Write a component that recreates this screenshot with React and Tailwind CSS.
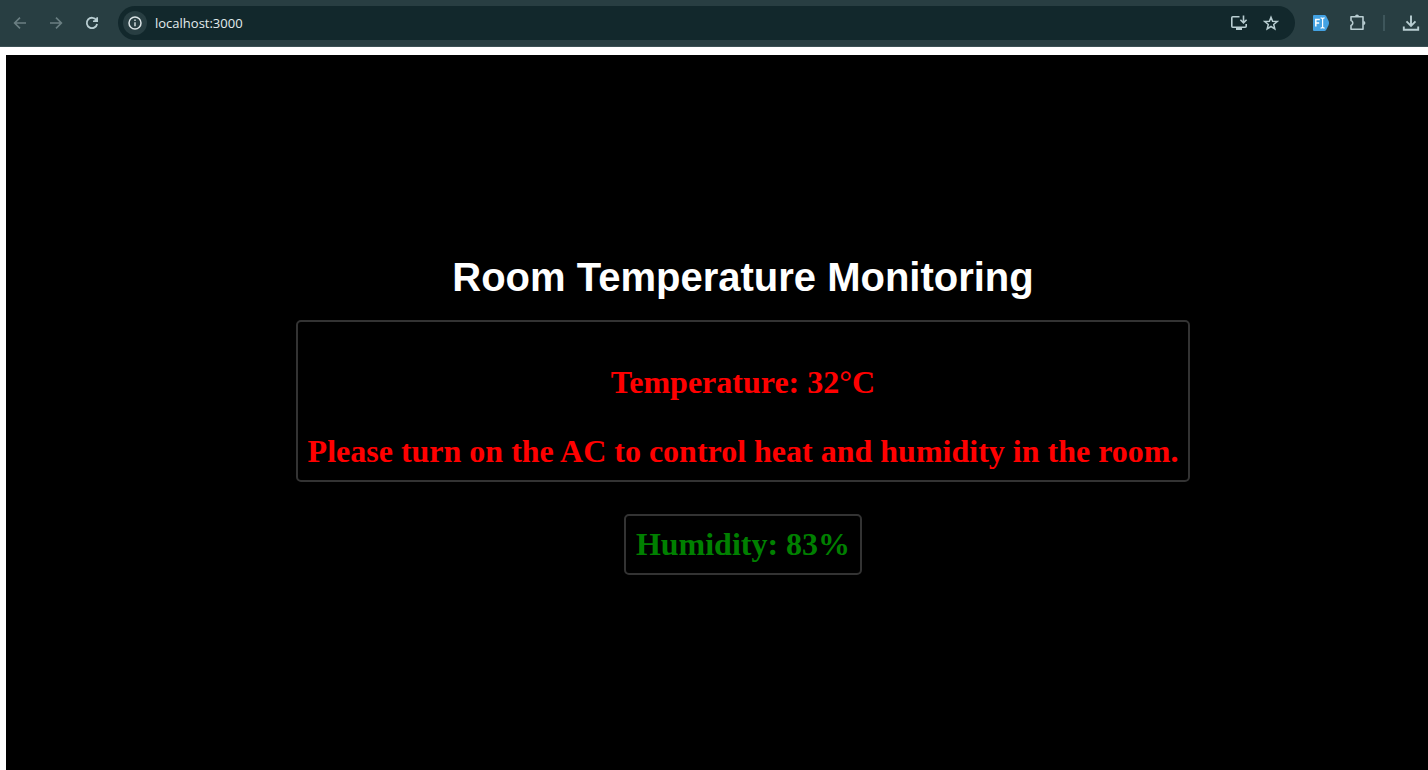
import React from "react";

function Icon({ children, size = 16, className = "" }) {
  return (
    <svg width={size} height={size} viewBox={`0 0 ${size} ${size}`} fill="none" stroke="currentColor" strokeWidth="1.6" className={className} aria-hidden="true">
      {children}
    </svg>
  );
}

function ToolButton({ label, className = "", children }) {
  return (
    <button type="button" aria-label={label} className={`flex shrink-0 items-center justify-center ${className}`}>
      {children}
    </button>
  );
}

function BrowserBar() {
  return (
    <header className="flex h-[47px] items-center border-b border-[#3b5054] bg-[#283e42] pl-3 pr-2 text-[#b9ced2]">
      <nav className="flex gap-5" aria-label="Browser navigation">
        <ToolButton label="Back" className="text-[#6b7f83]">
          <Icon><path d="M14 8H3M8 2.6 2.6 8 8 13.4" /></Icon>
        </ToolButton>
        <ToolButton label="Forward" className="text-[#6b7f83]">
          <Icon><path d="M2 8h11M8 2.6 13.4 8 8 13.4" /></Icon>
        </ToolButton>
        <ToolButton label="Reload">
          <Icon>
            <path d="M12.4 5.2A5.2 5.2 0 1 0 13.1 9" strokeWidth="1.8" />
            <path d="M13.2 2.2V6.3H9" />
            <path d="M13.2 2.6v3.7H9.6Z" fill="currentColor" stroke="none" />
          </Icon>
        </ToolButton>
      </nav>
      <div className="ml-[18px] flex h-[34px] flex-1 items-center rounded-full bg-[#12282c] pl-[5px] pr-4">
        <ToolButton label="View site information" className="size-6 rounded-full bg-[#283e42] text-[#dbe4e6]">
          <Icon>
            <circle cx="8" cy="8" r="6" strokeWidth="1.5" />
            <path d="M8 7.3v3.9M8 4.6v1.5" strokeWidth="1.4" />
          </Icon>
        </ToolButton>
        <input
          aria-label="Address"
          defaultValue="localhost:3000"
          className="ml-2 min-w-0 flex-1 bg-transparent pt-0.5 font-['Open_Sans','Noto_Sans',sans-serif] text-[13px] text-[#e3ecee] outline-none"
        />
        <ToolButton label="Install app">
          <Icon size={18}>
            <path d="M9.5 2.8H2.8Q1.8 2.8 1.8 3.8v8.4q0 1 1 1h12.4q1 0 1-1V10" />
            <path d="M13.5 1.5v7M10.4 5.8l3.1 3 3.1-3" />
            <path d="M6 14.8h6" strokeWidth="2.4" />
          </Icon>
        </ToolButton>
        <ToolButton label="Bookmark this page" className="ml-[15px]">
          <Icon>
            <path d="m8 2.2 1.6 4 4.6.3-3.5 3 1.1 4.4L8 11.5l-3.8 2.4 1.1-4.4-3.5-3 4.6-.3Z" strokeWidth="1.5" />
          </Icon>
        </ToolButton>
      </div>
      <ToolButton label="Form filler" className="ml-[18px]">
        <svg width="16" height="16" viewBox="0 0 16 16" aria-hidden="true">
          <path d="M1 0h10.5q1 0 1.6.9L15.6 6q.8 2 0 4l-2.5 5.1q-.6.9-1.6.9H1q-1 0-1-1V1Q0 0 1 0Z" fill="#43a2e3" />
          <path d="M2.8 11.5v-7h4M2.8 8h3.4" fill="none" stroke="#fff" strokeWidth="1.5" />
          <path d="M7.6 2.8q2 0 2 1.4v7.6q0 1.4-2 1.4M11.6 2.8q-2 0-2 1.4M9.6 11.8q0 1.4 2 1.4" fill="none" stroke="#fff" strokeWidth="1.2" />
        </svg>
      </ToolButton>
      <ToolButton label="Extensions" className="ml-5">
        <Icon size={18}>
          <path d="M2 2.8h12v12.4H2v-3.8a2.5 2.5 0 0 0 0-4.8Z" strokeLinejoin="round" />
          <path d="M6 2.6a2 2 0 0 1 4 0ZM14.4 7a2 2 0 0 1 0 4Z" fill="currentColor" stroke="none" />
        </Icon>
      </ToolButton>
      <span className="ml-4 h-4 w-0.5 bg-[#3e565b]" />
      <ToolButton label="Downloads" className="ml-[17px]">
        <Icon size={18}>
          <path d="M9 1.5v10M4.5 7.3 9 11.8l4.5-4.5M1.8 12.5v3.2h14.4v-3.2" strokeWidth="1.9" />
        </Icon>
      </ToolButton>
    </header>
  );
}

export default function App() {
  return (
    <div className="flex min-h-screen flex-col bg-white">
      <BrowserBar />
      <main className="ml-1.5 mt-2 flex flex-1 flex-col items-center justify-center bg-black pl-[52px] pt-1 font-['Liberation_Serif',serif] text-[32px] font-bold leading-[37px]">
        <h1 className="mb-5 font-['Liberation_Sans',sans-serif] text-[40px] leading-[46px] text-white">
          Room Temperature Monitoring
        </h1>
        <section className="mb-8 rounded-[5px] border-2 border-[#333333] p-2.5 text-center text-[#ff0000]">
          <h2 className="mt-8">Temperature: 32°C</h2>
          <p className="mt-8">Please turn on the AC to control heat and humidity in the room.</p>
        </section>
        <section className="rounded-[5px] border-2 border-[#333333] p-2.5 text-[#008000]">
          <h2>Humidity: 83%</h2>
        </section>
      </main>
    </div>
  );
}
